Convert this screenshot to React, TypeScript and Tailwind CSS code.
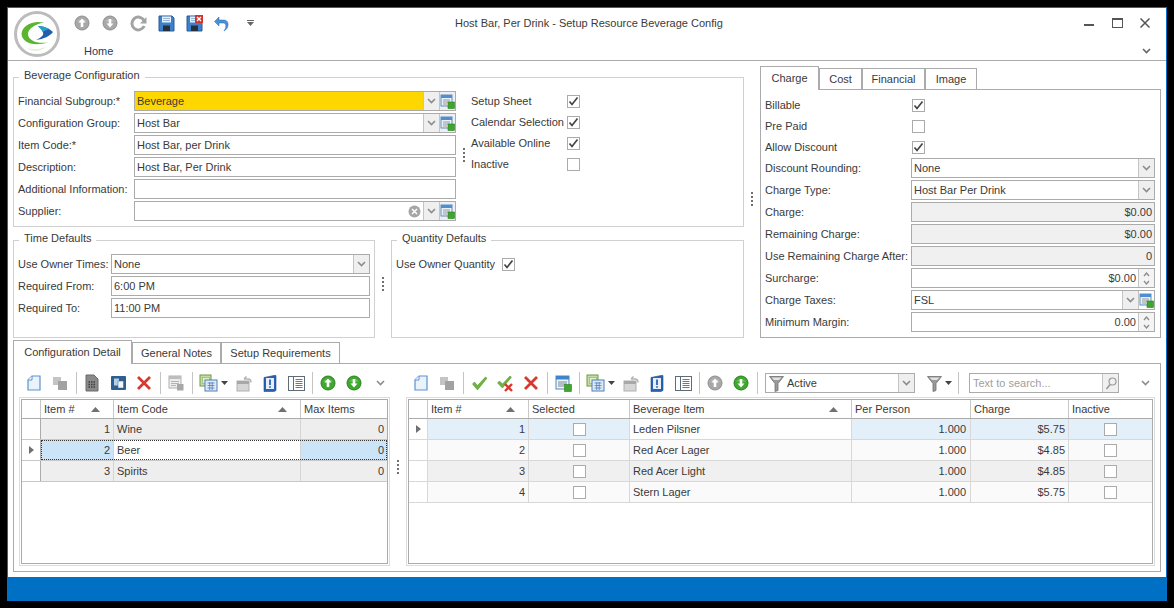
import React from 'react';

type Kids = { children?: React.ReactNode };

function Chev({ color = '#8c8c8c' }: { color?: string }) {
  return (
    <svg width="9" height="6" viewBox="0 0 9 6">
      <path d="M1 1l3.5 3.5L8 1" stroke={color} strokeWidth="1.6" fill="none" />
    </svg>
  );
}

function Lookup() {
  return (
    <svg width="15" height="15" viewBox="0 0 15 15">
      <rect x="1" y="1" width="11" height="11" fill="#e8f0f8" stroke="#5b8fc4" />
      <rect x="1" y="1" width="11" height="3" fill="#4f8ed0" />
      <path d="M3 6h7M3 8h7M3 10h4" stroke="#9a9a9a" />
      <rect x="8" y="8" width="6.5" height="6.5" fill="#3fa52f" stroke="#2b7d22" strokeWidth="0.6" />
    </svg>
  );
}

function Check({ on }: { on?: boolean }) {
  return (
    <div className="flex h-[13px] w-[13px] items-center justify-center border border-[#ababab] bg-white">
      {on && (
        <svg width="11" height="11" viewBox="0 0 11 11">
          <path d="M1.5 5.5l2.5 3 5.5-7" stroke="#444" strokeWidth="1.7" fill="none" />
        </svg>
      )}
    </div>
  );
}

function Dots() {
  return (
    <div className="flex flex-col gap-[2px]">
      <div className="h-[2px] w-[2px] bg-[#707070]" />
      <div className="h-[2px] w-[2px] bg-[#707070]" />
      <div className="h-[2px] w-[2px] bg-[#707070]" />
      <div className="h-[2px] w-[2px] bg-[#707070]" />
    </div>
  );
}

function Box({ children, disabled, right, yellow }: Kids & { disabled?: boolean; right?: boolean; yellow?: boolean }) {
  const bg = disabled ? 'bg-[#f0f0f0]' : yellow ? 'bg-[#ffd700]' : 'bg-white';
  return (
    <div className={`flex h-[20px] w-full items-center border border-[#ababab] ${bg} ${right ? 'text-right' : ''}`}>
      {children}
    </div>
  );
}

function Val({ children }: Kids) {
  return <span className="min-w-0 flex-1 truncate px-[2px]">{children}</span>;
}

function Side({ children, plain }: Kids & { plain?: boolean }) {
  return (
    <div className={`flex h-full w-[16px] shrink-0 items-center justify-center border-l border-[#c4c4c4] ${plain ? 'bg-white' : 'bg-[#efefef]'}`}>
      {children}
    </div>
  );
}

function Spin() {
  return (
    <div className="flex h-full w-[16px] shrink-0 flex-col items-center justify-center gap-[3px] border-l border-[#c4c4c4] bg-[#f4f4f4]">
      <svg width="7" height="5" viewBox="0 0 7 5"><path d="M1 4l2.5-3L6 4" stroke="#8c8c8c" strokeWidth="1.3" fill="none" /></svg>
      <svg width="7" height="5" viewBox="0 0 7 5"><path d="M1 1l2.5 3L6 1" stroke="#8c8c8c" strokeWidth="1.3" fill="none" /></svg>
    </div>
  );
}

function Logo() {
  return (
    <svg width="46" height="46" viewBox="0 0 46 46">
      <circle cx="23" cy="23" r="21.5" fill="#fff" stroke="#bcbcbc" strokeWidth="3" />
      <path d="M30 11.5C18 9 8 15 7.5 23 8 31 18 36 34 31.5 22 33 14 29 14 23 14 18 21 13 30 11.5z" fill="#5cb531" />
      <path d="M24 15C30 15 36 18 39 21 36 25 30 28 22 29 28 26 30 24 29 21.5 28 19 26 17 24 15z" fill="#1f5fae" />
      <path d="M24 15C28 15 32 16 35 18 32 19 30 20 29 21 28 19 26 17 24 15z" fill="#27a0c8" />
      <path d="M13 37C20 39 26 38 32 36 26 41 18 41 13 37z" fill="#e4f0d8" />
    </svg>
  );
}

function Round({ up, green, size = 14 }: { up?: boolean; green?: boolean; size?: number }) {
  const fill = green ? '#3fa82e' : '#a8a8a8';
  const ring = green ? '#2a7f1f' : '#8f8f8f';
  return (
    <svg width={size + 2} height={size + 2} viewBox="0 0 16 16">
      <circle cx="8" cy="8" r="7" fill={fill} stroke={ring} />
      <path d="M3 6.5a5.5 4 0 0 1 10 0" fill="#fff" opacity="0.25" />
      {up ? (
        <path d="M8 3.5L11.5 7.5H9.3V12H6.7V7.5H4.5z" fill="#fff" />
      ) : (
        <path d="M8 12.5L11.5 8.5H9.3V4H6.7V8.5H4.5z" fill="#fff" />
      )}
    </svg>
  );
}

function Refresh() {
  return (
    <svg width="17" height="17" viewBox="0 0 17 17">
      <path d="M14 5.5A6.4 6.4 0 1 0 14.2 11" stroke="#a3a3a3" strokeWidth="3" fill="none" />
      <path d="M16.5 2v6.5H10z" fill="#a3a3a3" />
    </svg>
  );
}

function Floppy({ close }: { close?: boolean }) {
  return (
    <svg width="17" height="17" viewBox="0 0 17 17">
      <path d="M1 1h13l2 2v13H1z" fill="#3d7fc9" stroke="#2a5c9a" />
      <rect x="4" y="1.5" width="9" height="6" fill="#e9f1fa" />
      <path d="M5 3.5h7M5 5.5h7" stroke="#9ab6d6" />
      <rect x="5" y="10.5" width="7" height="5.5" fill="#26303c" />
      {close && (
        <g>
          <rect x="9" y="0" width="8" height="8" fill="#d0342c" />
          <path d="M11 2l4 4M15 2l-4 4" stroke="#fff" strokeWidth="1.4" />
        </g>
      )}
    </svg>
  );
}

function Undo() {
  return (
    <svg width="16" height="17" viewBox="0 0 16 17">
      <path d="M5 5h4.5c3.5 0 5 2.5 4.5 5.5-.4 2.5-2 4.5-4 5.500 1.300-2 2-3.500 1.800-5.500C11.600 8.500 10.500 8 9 8H5v3L0.500 6.500 5 2z" fill="#4a90d9" stroke="#2f66a8" strokeWidth="0.5" />
    </svg>
  );
}

function NewDoc() {
  return (
    <svg width="16" height="18" viewBox="0 0 16 18">
      <path d="M2 6l4-4h8v14H2z" fill="#eaf3fb" stroke="#5b93cf" strokeWidth="1.2" />
      <path d="M2 6h4V2" fill="#fff" stroke="#5b93cf" />
    </svg>
  );
}

function Cubes() {
  return (
    <svg width="16" height="16" viewBox="0 0 16 16">
      <rect x="1" y="2" width="8" height="8" fill="#c4c4c4" />
      <rect x="6" y="6" width="9" height="9" fill="#a2a2a2" />
    </svg>
  );
}

function DocGrid() {
  return (
    <svg width="16" height="18" viewBox="0 0 16 18">
      <path d="M2 1h8l4 4v12H2z" fill="#8a8a8a" stroke="#6b6b6b" />
      <path d="M4.500 8h7M4.500 10.500h7M4.500 13h7" stroke="#3d3d3d" strokeWidth="1.500" strokeDasharray="1.500 1" />
    </svg>
  );
}

function BlueCopy() {
  return (
    <svg width="17" height="16" viewBox="0 0 17 16">
      <rect x="1" y="1" width="15" height="14" rx="1" fill="#2f5f8f" />
      <rect x="4" y="3.500" width="5" height="7" fill="#b6cfe6" />
      <rect x="8" y="6" width="5.500" height="7" fill="#f3f7fb" stroke="#2f5f8f" strokeWidth="0.500" />
    </svg>
  );
}

function RedX() {
  return (
    <svg width="16" height="16" viewBox="0 0 16 16">
      <path d="M2 2l12 12M14 2L2 14" stroke="#d63a2f" strokeWidth="2.800" />
    </svg>
  );
}

function GreyCal() {
  return (
    <svg width="16" height="16" viewBox="0 0 16 16">
      <rect x="1" y="1" width="12" height="12" fill="#ececec" stroke="#b0b0b0" />
      <rect x="1" y="1" width="12" height="3" fill="#bdbdbd" />
      <path d="M3 6.500h8M3 8.500h8M3 10.500h5" stroke="#b5b5b5" />
      <rect x="9" y="9" width="6.500" height="6.500" fill="#a8a8a8" />
    </svg>
  );
}

function BlueCal() {
  return (
    <svg width="17" height="17" viewBox="0 0 17 17">
      <rect x="1" y="1" width="13" height="13" fill="#eef4fa" stroke="#4f87c2" />
      <rect x="1" y="1" width="13" height="3.500" fill="#3f83cc" />
      <path d="M3 7h9M3 9h9M3 11h6" stroke="#7b8794" />
      <rect x="9.500" y="9.500" width="7" height="7" fill="#3fa52f" stroke="#2a7f1f" strokeWidth="0.600" />
    </svg>
  );
}

function Multi() {
  return (
    <div className="flex items-center justify-center gap-[3px]">
      <svg width="19" height="18" viewBox="0 0 19 18">
        <rect x="1" y="1" width="11" height="11" fill="#c4dca8" stroke="#6f9a3f" />
        <rect x="3.500" y="3.500" width="7" height="6" fill="#e3efd3" stroke="#8cb05f" strokeWidth="0.600" />
        <rect x="6" y="6" width="12" height="11" fill="#dfeaf6" stroke="#4f7fb8" />
        <path d="M8.500 9h7M8.500 11.500h7M8.500 14h7M10.700 8v8M13.200 8v8" stroke="#4f7fb8" strokeWidth="0.800" />
      </svg>
      <svg width="7" height="4" viewBox="0 0 7 4"><path d="M0 0h7L3.500 4z" fill="#444" /></svg>
    </div>
  );
}

function UndoWin() {
  return (
    <svg width="17" height="17" viewBox="0 0 17 17">
      <rect x="1" y="6" width="12" height="10" fill="#d6d6d6" stroke="#b0b0b0" />
      <rect x="1" y="6" width="12" height="3" fill="#a8a8a8" />
      <path d="M8 4h4c2 0 3 1 3 3.500M8 4l2.500-2.500" stroke="#b3b3b3" strokeWidth="1.500" fill="none" />
    </svg>
  );
}

function Book() {
  return (
    <svg width="14" height="17" viewBox="0 0 14 17">
      <path d="M1 2.500L11 .5h2v15l-2 1H1z" fill="#2a62b0" stroke="#1f4c8c" strokeWidth="0.600" />
      <rect x="3" y="3" width="8" height="11" fill="#e6eff9" />
      <path d="M7 4.500v5.500M7 11.200v1.600" stroke="#2a62b0" strokeWidth="1.800" />
    </svg>
  );
}

function PanelIcon() {
  return (
    <svg width="17" height="15" viewBox="0 0 17 15">
      <rect x=".5" y=".5" width="16" height="14" fill="#fff" stroke="#5f6b78" />
      <path d="M5.500 1v13" stroke="#5f6b78" />
      <path d="M7.500 3.500h7M7.500 5.500h7M7.500 7.500h7M7.500 9.500h7M7.500 11.500h7" stroke="#4a7fb8" />
    </svg>
  );
}

function GreenCheck() {
  return (
    <svg width="17" height="15" viewBox="0 0 17 15">
      <path d="M1.500 8l2-2 3 3.500L14.500 1l1.500 1.200L6.500 14z" fill="#6eb43f" stroke="#4c8c2a" strokeWidth="0.500" />
    </svg>
  );
}

function CheckCross() {
  return (
    <svg width="17" height="17" viewBox="0 0 17 17">
      <path d="M.5 8l2-2 3 3L13 1l1.500 1.200L5.500 13z" fill="#6eb43f" stroke="#4c8c2a" strokeWidth="0.500" />
      <path d="M8 9l7 7M15 9l-7 7" stroke="#d63a2f" strokeWidth="2.400" />
    </svg>
  );
}

function Funnel() {
  return (
    <svg width="15" height="17" viewBox="0 0 15 17">
      <path d="M.5 1.500h14L9 8.500v7l-3 1v-8z" fill="#9a9a9a" stroke="#6e6e6e" strokeWidth="0.800" />
      <path d="M2.500 2.500h10L10 5H5z" fill="#e2e2e2" />
    </svg>
  );
}

function Btn({ children }: Kids) {
  return <div className="flex h-full w-[26px] shrink-0 items-center justify-center">{children}</div>;
}

function Sep() {
  return (
    <div className="flex h-full w-[6px] shrink-0 items-center justify-center">
      <div className="h-[22px] w-px bg-[#c4c4c4]" />
    </div>
  );
}

function Label({ children, className }: Kids & { className: string }) {
  return <div className={`shrink-0 whitespace-nowrap ${className}`}>{children}</div>;
}

function Group({ title, className, children }: Kids & { title: string; className: string }) {
  return (
    <div className={`relative border border-[#d0d0d0] ${className}`}>
      <div className="absolute left-[5px] top-[-10px] h-[15px] bg-white px-[5px] leading-[15px]">{title}</div>
      {children}
    </div>
  );
}

const lookupFields = [
  { label: 'Financial Subgroup:*', value: 'Beverage', yellow: true, clear: false, combo: true },
  { label: 'Configuration Group:', value: 'Host Bar', yellow: false, clear: false, combo: true },
  { label: 'Item Code:*', value: 'Host Bar, per Drink', yellow: false, clear: false, combo: false },
  { label: 'Description:', value: 'Host Bar, Per Drink', yellow: false, clear: false, combo: false },
  { label: 'Additional Information:', value: '', yellow: false, clear: false, combo: false },
  { label: 'Supplier:', value: '', yellow: false, clear: true, combo: true },
];

const sheetChecks = [
  { label: 'Setup Sheet', on: true },
  { label: 'Calendar Selection', on: true },
  { label: 'Available Online', on: true },
  { label: 'Inactive', on: false },
];

function BeverageBox() {
  return (
    <Group title="Beverage Configuration" className="flex h-[150px] pl-[4px] pt-[13px]">
      <div className="flex w-[438px] shrink-0 flex-col gap-[2px]">
        {lookupFields.map((f) => (
          <div key={f.label} className="flex items-center">
            <Label className="w-[116px]">{f.label}</Label>
            <div className="w-[322px]">
              <Box yellow={f.yellow}>
                <Val>{f.value}</Val>
                {f.clear && (
                  <svg className="mr-[2px]" width="13" height="13" viewBox="0 0 13 13">
                    <circle cx="6.500" cy="6.500" r="6" fill="#a6a6a6" />
                    <path d="M4 4l5 5M9 4l-5 5" stroke="#fff" strokeWidth="1.500" />
                  </svg>
                )}
                {f.combo && <Side><Chev /></Side>}
                {f.combo && <Side><Lookup /></Side>}
              </Box>
            </div>
          </div>
        ))}
      </div>
      <div className="flex w-[15px] shrink-0 justify-center pt-[57px]">
        <Dots />
      </div>
      <div className="flex flex-col">
        {sheetChecks.map((c) => (
          <div key={c.label} className="flex h-[21px] items-center">
            <Label className="w-[96px]">{c.label}</Label>
            <Check on={c.on} />
          </div>
        ))}
      </div>
    </Group>
  );
}

function DefaultsRow() {
  return (
    <div className="mt-[13px] flex h-[98px]">
      <Group title="Time Defaults" className="w-[362px] shrink-0 pl-[4px] pt-[13px]">
        <div className="flex flex-col gap-[2px]">
          <div className="flex items-center">
            <Label className="w-[93px]">Use Owner Times:</Label>
            <div className="w-[259px]">
              <Box><Val>None</Val><Side><Chev /></Side></Box>
            </div>
          </div>
          <div className="flex items-center">
            <Label className="w-[93px]">Required From:</Label>
            <div className="w-[259px]"><Box><Val>6:00 PM</Val></Box></div>
          </div>
          <div className="flex items-center">
            <Label className="w-[93px]">Required To:</Label>
            <div className="w-[259px]"><Box><Val>11:00 PM</Val></Box></div>
          </div>
        </div>
      </Group>
      <div className="flex w-[16px] shrink-0 justify-center pt-[37px]">
        <Dots />
      </div>
      <Group title="Quantity Defaults" className="w-[353px] shrink-0 pl-[4px] pt-[13px]">
        <div className="flex h-[20px] items-center">
          <Label className="w-[106px]">Use Owner Quantity</Label>
          <Check on />
        </div>
      </Group>
    </div>
  );
}

function Tab({ label, active, className }: { label: string; active?: boolean; className: string }) {
  return (
    <div
      className={`relative flex shrink-0 items-center justify-center border border-b-0 border-[#ababab] ${className} ${
        active ? 'z-10 -mb-px h-[24px] bg-white pb-px' : 'h-[21px] bg-white'
      }`}
    >
      {label}
    </div>
  );
}

const checkRows = [
  { label: 'Billable', on: true },
  { label: 'Pre Paid', on: false },
  { label: 'Allow Discount', on: true },
];

function ChargePanel() {
  const Row = ({ label, children }: Kids & { label: string }) => (
    <div className="flex items-center">
      <Label className="w-[146px]">{label}</Label>
      <div className="w-[244px]">{children}</div>
    </div>
  );
  return (
    <div className="w-[401px] shrink-0 pt-[5px]">
      <div className="flex items-end">
        <Tab label="Charge" active className="w-[59px]" />
        <Tab label="Cost" className="w-[43px]" />
        <Tab label="Financial" className="w-[63px]" />
        <Tab label="Image" className="w-[52px]" />
      </div>
      <div className="h-[249px] border border-[#ababab] pl-[4px] pt-[5px]">
        {checkRows.map((c) => (
          <div key={c.label} className="flex h-[21px] items-center">
            <Label className="w-[147px]">{c.label}</Label>
            <Check on={c.on} />
          </div>
        ))}
        <div className="flex flex-col gap-[2px]">
          <Row label="Discount Rounding:"><Box><Val>None</Val><Side><Chev /></Side></Box></Row>
          <Row label="Charge Type:"><Box><Val>Host Bar Per Drink</Val><Side><Chev /></Side></Box></Row>
          <Row label="Charge:"><Box disabled right><Val>$0.00</Val></Box></Row>
          <Row label="Remaining Charge:"><Box disabled right><Val>$0.00</Val></Box></Row>
          <Row label="Use Remaining Charge After:"><Box disabled right><Val>0</Val></Box></Row>
          <Row label="Surcharge:"><Box right><Val>$0.00</Val><Spin /></Box></Row>
          <Row label="Charge Taxes:">
            <Box><Val>FSL</Val><Side><Chev /></Side><Side plain><Lookup /></Side></Box>
          </Row>
          <Row label="Minimum Margin:"><Box right><Val>0.00</Val><Spin /></Box></Row>
        </div>
      </div>
    </div>
  );
}

function SortArrow() {
  return (
    <svg className="mr-[13px] shrink-0" width="9" height="5" viewBox="0 0 9 5">
      <path d="M0 5L4.500 0 9 5z" fill="#707070" />
    </svg>
  );
}

function Head({ className, label, sorted }: { className: string; label?: string; sorted?: boolean }) {
  return (
    <div className={`flex h-full shrink-0 items-center justify-between border-r border-[#c8c8c8] pl-[3px] ${className}`}>
      <span>{label}</span>
      {sorted && <SortArrow />}
    </div>
  );
}

function Pointer() {
  return (
    <svg width="5" height="8" viewBox="0 0 5 8">
      <path d="M0 0l5 4-5 4z" fill="#707070" />
    </svg>
  );
}

function GridFrame({ className, children }: Kids & { className: string }) {
  return (
    <div className={`h-[169px] border border-[#dcdcdc] p-px ${className}`}>
      <div className="h-full border border-[#ababab]">{children}</div>
    </div>
  );
}

const leftRows = [
  { num: '1', code: 'Wine', max: '0' },
  { num: '2', code: 'Beer', max: '0' },
  { num: '3', code: 'Spirits', max: '0' },
];

function LeftGrid() {
  return (
    <GridFrame className="w-[371px]">
      <div className="flex h-[19px] border-b border-[#ababab]">
        <Head className="w-[19px]" />
        <Head className="w-[73px]" label="Item #" sorted />
        <Head className="w-[187px]" label="Item Code" sorted />
        <div className="flex h-full flex-1 items-center pl-[3px]">Max Items</div>
      </div>
      {leftRows.map((r, i) => {
        const sel = i === 1;
        return (
          <div key={r.num} className="relative flex h-[21px] border-b border-[#c8c8c8]">
            <div className="flex w-[19px] shrink-0 items-center justify-center border-r border-[#ababab] bg-white">
              {sel && <Pointer />}
            </div>
            <div className={`w-[73px] shrink-0 border-r border-[#d4d4d4] pr-[3px] text-right leading-[20px] ${sel ? 'bg-[#cce4f7]' : 'bg-[#eeeeee]'}`}>{r.num}</div>
            <div className={`w-[187px] shrink-0 border-r border-[#d4d4d4] pl-[3px] leading-[20px] ${sel ? 'bg-white' : 'bg-[#eeeeee]'}`}>{r.code}</div>
            <div className={`flex-1 pr-[3px] text-right leading-[20px] ${sel ? 'bg-[#cce4f7]' : 'bg-[#eeeeee]'}`}>{r.max}</div>
            {sel && <div className="absolute inset-y-0 left-[19px] right-0 border border-dotted border-[#333]" />}
          </div>
        );
      })}
    </GridFrame>
  );
}

const rightRows = [
  { num: '1', item: 'Leden Pilsner', per: '1.000', charge: '$5.75', bg: 'bg-[#e3f0fa]', mid: 'bg-white' },
  { num: '2', item: 'Red Acer Lager', per: '1.000', charge: '$4.85', bg: 'bg-[#fafafa]', mid: 'bg-[#fafafa]' },
  { num: '3', item: 'Red Acer Light', per: '1.000', charge: '$4.85', bg: 'bg-[#f0f0f0]', mid: 'bg-[#f0f0f0]' },
  { num: '4', item: 'Stern Lager', per: '1.000', charge: '$5.75', bg: 'bg-[#fafafa]', mid: 'bg-[#fafafa]' },
];

function RightGrid() {
  return (
    <GridFrame className="w-[749px]">
      <div className="flex h-[19px] border-b border-[#ababab]">
        <Head className="w-[19px]" />
        <Head className="w-[101px]" label="Item #" sorted />
        <Head className="w-[101px]" label="Selected" />
        <Head className="w-[222px]" label="Beverage Item" sorted />
        <Head className="w-[119px]" label="Per Person" />
        <Head className="w-[98px]" label="Charge" />
        <div className="flex h-full flex-1 items-center pl-[3px]">Inactive</div>
      </div>
      {rightRows.map((r, i) => (
        <div key={r.num} className="flex h-[21px] border-b border-[#d8d8d8]">
          <div className="flex w-[19px] shrink-0 items-center justify-center border-r border-[#d8d8d8] bg-white">
            {i === 0 && <Pointer />}
          </div>
          <div className={`w-[101px] shrink-0 border-r border-[#d8d8d8] pr-[3px] text-right leading-[20px] ${r.bg}`}>{r.num}</div>
          <div className={`flex w-[101px] shrink-0 items-center justify-center border-r border-[#d8d8d8] ${r.bg}`}><Check /></div>
          <div className={`w-[222px] shrink-0 border-r border-[#d8d8d8] pl-[3px] leading-[20px] ${r.mid}`}>{r.item}</div>
          <div className={`w-[119px] shrink-0 border-r border-[#d8d8d8] pr-[4px] text-right leading-[20px] ${r.bg}`}>{r.per}</div>
          <div className={`w-[98px] shrink-0 border-r border-[#d8d8d8] pr-[3px] text-right leading-[20px] ${r.bg}`}>{r.charge}</div>
          <div className={`flex flex-1 items-center justify-center ${r.bg}`}><Check /></div>
        </div>
      ))}
    </GridFrame>
  );
}

function LeftToolbar() {
  return (
    <div className="ml-[2px] flex h-[26px]">
      <Btn><NewDoc /></Btn>
      <Btn><Cubes /></Btn>
      <Sep />
      <Btn><DocGrid /></Btn>
      <Btn><BlueCopy /></Btn>
      <Btn><RedX /></Btn>
      <Sep />
      <Btn><GreyCal /></Btn>
      <Sep />
      <div className="flex h-full w-[36px] shrink-0 items-center justify-center"><Multi /></div>
      <Btn><UndoWin /></Btn>
      <Btn><Book /></Btn>
      <Btn><PanelIcon /></Btn>
      <Sep />
      <Btn><Round up green /></Btn>
      <Btn><Round green /></Btn>
      <Btn><Chev /></Btn>
    </div>
  );
}

function RightToolbar() {
  return (
    <div className="ml-[2px] flex h-[26px] items-center">
      <Btn><NewDoc /></Btn>
      <Btn><Cubes /></Btn>
      <Sep />
      <Btn><GreenCheck /></Btn>
      <Btn><CheckCross /></Btn>
      <Btn><RedX /></Btn>
      <Sep />
      <Btn><BlueCal /></Btn>
      <Sep />
      <div className="flex h-full w-[36px] shrink-0 items-center justify-center"><Multi /></div>
      <Btn><UndoWin /></Btn>
      <Btn><Book /></Btn>
      <Btn><PanelIcon /></Btn>
      <Sep />
      <Btn><Round up /></Btn>
      <Btn><Round green /></Btn>
      <Sep />
      <div className="ml-[5px] flex h-[20px] w-[150px] shrink-0 items-center border border-[#ababab] bg-white">
        <div className="ml-[3px] mr-[3px] flex w-[15px] justify-center"><Funnel /></div>
        <span className="flex-1">Active</span>
        <Side><Chev /></Side>
      </div>
      <div className="ml-[8px] flex w-[32px] shrink-0 items-center justify-center gap-[3px]">
        <Funnel />
        <svg width="7" height="4" viewBox="0 0 7 4"><path d="M0 0h7L3.500 4z" fill="#444" /></svg>
      </div>
      <Sep />
      <div className="ml-[8px] flex h-[20px] w-[150px] shrink-0 items-center border border-[#ababab] bg-white">
        <span className="flex-1 pl-[3px] text-[#a0a0a0]">Text to search...</span>
        <div className="flex h-full w-[16px] items-center justify-center border-l border-[#c4c4c4] bg-[#f0f0f0]">
          <svg width="12" height="13" viewBox="0 0 12 13">
            <circle cx="7.500" cy="4.500" r="3.500" fill="none" stroke="#9a9a9a" strokeWidth="1.200" />
            <path d="M5 7.500L1.500 12" stroke="#9a9a9a" strokeWidth="1.600" />
          </svg>
        </div>
      </div>
      <div className="ml-[13px] flex w-[26px] shrink-0 justify-center"><Chev /></div>
    </div>
  );
}

export default function App() {
  return (
    <div
      className="h-[608px] w-[1174px] overflow-hidden bg-black pl-[7px] pt-[7px] text-[11px] leading-[15px] text-[#3a3a3a]"
      style={{ fontFamily: '"Liberation Sans", Arial, sans-serif' }}
    >
      <div className="flex h-[594px] w-[1160px] flex-col border border-[#0072c6] bg-white">
        {/* ribbon */}
        <div className="flex h-[53px] shrink-0 border-b border-[#ababab]">
          <div className="ml-[6px] mt-[3px] shrink-0"><Logo /></div>
          <div className="ml-[8px] flex flex-1 flex-col">
            <div className="flex h-[30px] items-center">
              <div className="flex w-[28px] justify-center"><Round up size={14} /></div>
              <div className="flex w-[28px] justify-center"><Round size={14} /></div>
              <div className="flex w-[28px] justify-center"><Refresh /></div>
              <div className="flex w-[28px] justify-center"><Floppy /></div>
              <div className="flex w-[28px] justify-center"><Floppy close /></div>
              <div className="flex w-[28px] justify-center"><Undo /></div>
              <div className="flex w-[28px] justify-center">
                <svg width="7" height="6" viewBox="0 0 7 6"><path d="M0 0h7v1H0zM0 2h7L3.500 6z" fill="#666" /></svg>
              </div>
              <div className="ml-[191px] whitespace-nowrap">Host Bar, Per Drink - Setup Resource Beverage Config</div>
              <div className="ml-auto mr-[7px] flex">
                <div className="flex h-[28px] w-[28px] items-center justify-center">
                  <div className="mt-[3px] h-[2px] w-[10px] bg-[#555]" />
                </div>
                <div className="flex h-[28px] w-[28px] items-center justify-center">
                  <div className="h-[10px] w-[11px] border border-t-2 border-[#555]" />
                </div>
                <div className="flex h-[28px] w-[28px] items-center justify-center">
                  <svg width="10" height="10" viewBox="0 0 10 10"><path d="M.5.500l9 9M9.500.500l-9 9" stroke="#555" strokeWidth="1.500" /></svg>
                </div>
              </div>
            </div>
            <div className="flex flex-1 items-center pt-[4px]">
              <span className="ml-[16px] text-[#2b3a55]">Home</span>
              <div className="ml-auto mr-[15px]"><Chev color="#666" /></div>
            </div>
          </div>
        </div>

        {/* main form */}
        <div className="flex-1 pl-[5px]">
          <div className="flex h-[277px]">
            <div className="w-[731px] shrink-0 pt-[16px]">
              <BeverageBox />
              <DefaultsRow />
            </div>
            <div className="flex w-[16px] shrink-0 justify-center pt-[131px]">
              <Dots />
            </div>
            <ChargePanel />
          </div>

          <div className="mt-[2px] flex h-[23px] items-end">
            <Tab label="Configuration Detail" active className="w-[119px]" />
            <Tab label="General Notes" className="w-[89px]" />
            <Tab label="Setup Requirements" className="w-[119px]" />
          </div>
          <div className="flex h-[209px] w-[1148px] border border-[#ababab] pt-[6px]">
            <div className="w-[376px] shrink-0 pl-[5px]">
              <LeftToolbar />
              <div className="mt-px"><LeftGrid /></div>
            </div>
            <div className="flex w-[16px] shrink-0 justify-center pt-[90px]">
              <Dots />
            </div>
            <div className="w-[749px] shrink-0">
              <RightToolbar />
              <div className="mt-px"><RightGrid /></div>
            </div>
          </div>
        </div>

        {/* status bar */}
        <div className="h-[23px] shrink-0 bg-[#0070c4]" />
      </div>
    </div>
  );
}
